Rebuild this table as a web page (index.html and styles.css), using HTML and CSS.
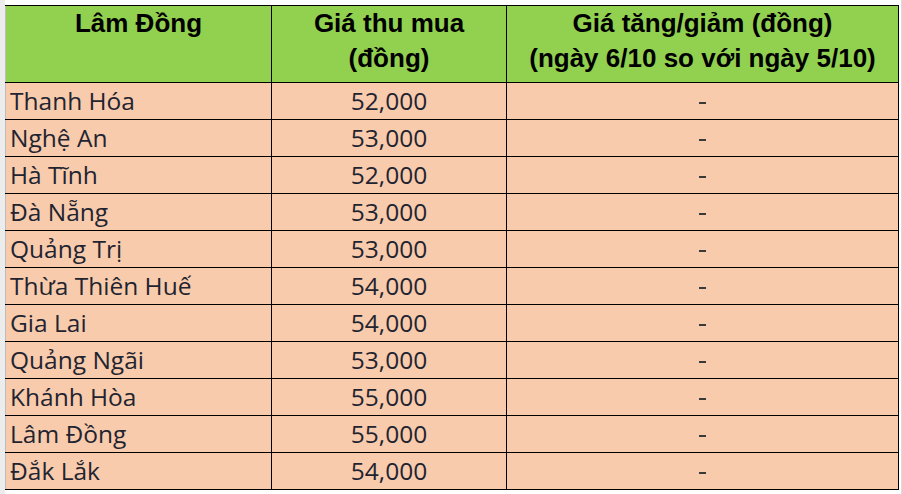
FILE: index.html
```html
<!DOCTYPE html>
<html lang="vi">
<head>
<meta charset="utf-8">
<link rel="stylesheet" href="styles.css">
</head>
<body>
<div class="sheet">
<table class="price-table">
  <colgroup>
    <col class="c1"><col class="c2"><col class="c3">
  </colgroup>
  <thead>
    <tr>
      <th>Lâm Đồng</th>
      <th>Giá thu mua<br>(đồng)</th>
      <th>Giá tăng/giảm (đồng)<br>(ngày 6/10 so với ngày 5/10)</th>
    </tr>
  </thead>
  <tbody>
    <tr><td class="name">Thanh Hóa</td><td class="num">52,000</td><td class="chg"><span class="dash"></span></td></tr>
    <tr><td class="name">Nghệ An</td><td class="num">53,000</td><td class="chg"><span class="dash"></span></td></tr>
    <tr><td class="name">Hà Tĩnh</td><td class="num">52,000</td><td class="chg"><span class="dash"></span></td></tr>
    <tr><td class="name">Đà Nẵng</td><td class="num">53,000</td><td class="chg"><span class="dash"></span></td></tr>
    <tr><td class="name">Quảng Trị</td><td class="num">53,000</td><td class="chg"><span class="dash"></span></td></tr>
    <tr><td class="name">Thừa Thiên Huế</td><td class="num">54,000</td><td class="chg"><span class="dash"></span></td></tr>
    <tr><td class="name">Gia Lai</td><td class="num">54,000</td><td class="chg"><span class="dash"></span></td></tr>
    <tr><td class="name">Quảng Ngãi</td><td class="num">53,000</td><td class="chg"><span class="dash"></span></td></tr>
    <tr><td class="name">Khánh Hòa</td><td class="num">55,000</td><td class="chg"><span class="dash"></span></td></tr>
    <tr><td class="name">Lâm Đồng</td><td class="num">55,000</td><td class="chg"><span class="dash"></span></td></tr>
    <tr><td class="name">Đắk Lắk</td><td class="num">54,000</td><td class="chg"><span class="dash"></span></td></tr>
  </tbody>
</table>
</div>
</body>
</html>
```
FILE: styles.css
```css
html, body {
  margin: 0;
  padding: 0;
  background: #ffffff;
}
.sheet {
  padding: 5px 0 0 0;
  border-left: 5px solid #ececec;
  border-right: 1px solid #dcdcdc;
  width: 896px;
  min-height: 489px;
}
.price-table {
  border-collapse: collapse;
  table-layout: fixed;
  width: 893px;
}
.c1 { width: 266px; }
.c2 { width: 235px; }
.c3 { width: 392px; }
.price-table th,
.price-table td {
  border: 1px solid #000;
  padding: 0;
}
.price-table tr > :first-child {
  border-left-color: #bdbdbd;
}
.price-table th {
  background: #92d050;
  height: 76px;
  vertical-align: top;
  font-family: "Liberation Sans", Arial, sans-serif;
  font-weight: bold;
  font-size: 26px;
  line-height: 35px;
  color: #000;
  padding-top: 0;
  text-align: center;
}
.price-table td {
  background: #f8cbad;
  height: 36px;
  font-family: "Open Sans", "Noto Sans", sans-serif;
  font-size: 24.5px;
  line-height: 30px;
  color: #1f2430;
  vertical-align: middle;
}
.price-table td.name {
  padding-left: 4px;
  text-align: left;
}
.num {
  text-align: center;
}
.chg {
  text-align: center;
}
.dash {
  display: inline-block;
  width: 7px;
  height: 2px;
  background: #3a3a3a;
  vertical-align: middle;
}
```
